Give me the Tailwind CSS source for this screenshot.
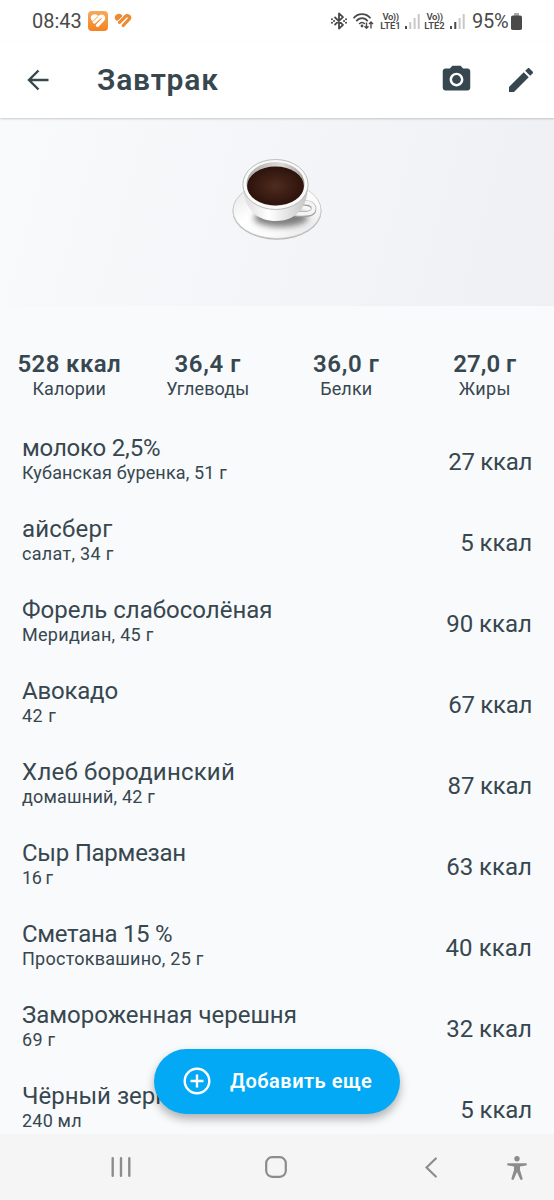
<!DOCTYPE html>
<html lang="ru">
<head>
  <meta charset="UTF-8">
  <meta name="viewport" content="width=device-width, initial-scale=1.0">
  <title>Завтрак</title>
  <script src="https://cdn.jsdelivr.net/npm/@tailwindcss/browser@4"></script>
</head>
<body class="bg-[#f9fafc] font-['Roboto',sans-serif] text-[#37474f]">
  <div class="relative flex h-[1200px] w-[554px] flex-col overflow-hidden">

    <!-- Status bar -->
    <div class="flex h-[42px] shrink-0 items-center bg-white pl-8 pr-[32px] text-[#4a4a4a]">
      <span class="w-[50px] whitespace-nowrap text-[20px] leading-none">08:43</span>
      <svg class="ml-[6px] h-5 w-5" viewBox="0 0 20 20">
        <defs>
          <linearGradient id="orange" x1="0" y1="0" x2="0" y2="1">
            <stop offset="0" stop-color="#f6a95c"/>
            <stop offset="1" stop-color="#f58220"/>
          </linearGradient>
        </defs>
        <rect width="20" height="20" rx="4" fill="url(#orange)"/>
        <g fill="none" stroke="#fff" stroke-width="3.200" stroke-linecap="round" stroke-linejoin="round">
          <path d="M4.600 7.800C3.800 5.500 6.500 4 8.500 5.700"/>
          <path d="M6.300 11 12 5.800c1.800-1.700 4.300 0 3.200 2"/>
          <path d="M9.500 14.300 15 8.500" stroke-width="3.400"/>
          <path d="M5 8.300 8.500 5.700"/>
        </g>
        <path d="M5.300 9.900 10 5.600M8 13l5.500-5.400" stroke="#f79440" stroke-width=".9"/>
      </svg>
      <svg class="ml-[6px] h-4 w-[18px]" viewBox="0 0 18 16" fill="none" stroke="#ee8a32" stroke-width="3.200" stroke-linecap="round" stroke-linejoin="round">
        <path d="M2.800 5.800C1.500 3.500 4.500 1.300 6.800 3.200L3.300 6"/>
        <path d="M5.500 9.300 11.300 3.600c2-2 5.200-.3 4.200 2L9.300 12.500"/>
        <path d="M3.800 8.200 9.200 3M7 11.500l6-6" stroke="#fff" stroke-width=".9" stroke-linecap="butt"/>
      </svg>

      <div class="ml-auto flex items-center">
        <svg class="h-[18px] w-4" viewBox="0 0 16 18" fill="none" stroke="#4a4a4a" stroke-width="1.800" stroke-linejoin="round">
          <path d="M3.500 5 12 12.800 8 16.600V1.400L12 5.200 3.500 13"/>
          <path d="M3 9h.1M13 9h.1M.9 7.200h.1M.9 10.800h.1M15 7.200h.1M15 10.800h.1" stroke-width="2" stroke-linecap="round"/>
        </svg>
        <svg class="ml-[5px] h-[18px] w-[23px]" viewBox="0 0 23 18" fill="none" stroke="#4a4a4a" stroke-width="1.700">
          <path d="M1.500 6.200C6 .7 14 .7 18.500 6.200M4.300 9.200c3.200-4 8.200-4 11.400 0M7.200 12c1.600-2 4-2 5.600 0"/>
          <circle cx="10" cy="14" r="1.400" fill="#4a4a4a" stroke="none"/>
          <path d="M14.500 10.500v6M12.500 14.300l2 2 2-2M19 16.500V10M17 12l2-2 2 2" stroke-width="1.400"/>
        </svg>
        <div class="ml-[5px] w-[21px] whitespace-nowrap text-center text-[9.500px] font-semibold leading-[9px]">
          <div class="tracking-[-0.5px]">Vo))</div>
          <div class="tracking-[-0.1px]">LTE1</div>
        </div>
        <svg class="ml-[4px] h-4 w-[15px]" viewBox="0 0 15 16">
          <path d="M0 13h2v3H0z" fill="#4a4a4a"/>
          <path d="M4.300 9h2v7h-2zM8.600 5h2v11h-2zM12.700 1h2v15h-2z" fill="#c8c8c8"/>
        </svg>
        <div class="ml-[4px] w-[21px] whitespace-nowrap text-center text-[9.500px] font-semibold leading-[9px]">
          <div class="tracking-[-0.5px]">Vo))</div>
          <div class="tracking-[-0.1px]">LTE2</div>
        </div>
        <svg class="ml-[5px] h-4 w-[15px]" viewBox="0 0 15 16">
          <path d="M0 13h2v3H0zM4.300 9h2v7h-2z" fill="#4a4a4a"/>
          <path d="M8.600 5h2v11h-2zM12.700 1h2v15h-2z" fill="#c8c8c8"/>
        </svg>
        <span class="ml-[7px] w-[39px] whitespace-nowrap text-[20px] leading-none tracking-[-0.2px]">95%</span>
        <svg class="h-[17px] w-[11px]" viewBox="0 0 11 17">
          <path d="M3 0h5v3H3z" fill="#aaa"/>
          <rect y="2.500" width="11" height="14.500" rx="1.800" fill="#4a4a4a"/>
        </svg>
      </div>
    </div>

    <!-- App bar -->
    <header class="z-10 flex h-[76px] shrink-0 items-center bg-white pl-[27px] pr-[17px] shadow-[0_1px_2px_rgba(0,0,0,0.2)]">
      <svg class="h-[22px] w-[22px]" viewBox="0 0 22 22" fill="none" stroke="#37474f" stroke-width="2.400">
        <path d="M21.500 11H2M11.500 1.500 2 11l9.500 9.500"/>
      </svg>
      <h1 class="ml-12 text-[30px] font-semibold leading-none tracking-[0.8px]">Завтрак</h1>
      <svg class="ml-auto h-[33px] w-[33px] -translate-y-px" viewBox="0 0 24 24" fill="#37474f">
        <circle cx="12" cy="12" r="3.200"/>
        <path d="M9 2 7.170 4H4c-1.100 0-2 .9-2 2v12c0 1.100.9 2 2 2h16c1.100 0 2-.9 2-2V6c0-1.100-.9-2-2-2h-3.170L15 2H9zm3 15c-2.760 0-5-2.240-5-5s2.240-5 5-5 5 2.240 5 5-2.240 5-5 5z"/>
      </svg>
      <svg class="ml-8 h-8 w-8" viewBox="0 0 24 24" fill="#37474f">
        <path d="M3 17.250V21h3.750L17.810 9.940l-3.750-3.750L3 17.250zM20.710 7.040c.39-.39.39-1.020 0-1.410l-2.340-2.340c-.39-.39-1.020-.39-1.410 0l-1.830 1.830 3.750 3.750 1.830-1.830z"/>
      </svg>
    </header>

    <!-- Meal picture -->
    <div class="flex h-[188px] shrink-0 justify-center bg-linear-[105deg,#f9fafc,#eff0f3] pt-[41px]">
      <svg class="h-[86px] w-[92px]" viewBox="0 0 92 86">
        <defs>
          <linearGradient id="saucer" x1="0" y1="0" x2="1" y2="1">
            <stop offset="0" stop-color="#e0e0e0"/>
            <stop offset=".4" stop-color="#fff"/>
            <stop offset=".7" stop-color="#fafafa"/>
            <stop offset="1" stop-color="#dedede"/>
          </linearGradient>
          <linearGradient id="cup" x1="0" y1="0" x2="1" y2="0">
            <stop offset="0" stop-color="#dcdcdc"/>
            <stop offset=".4" stop-color="#fff"/>
            <stop offset="1" stop-color="#c4c4c4"/>
          </linearGradient>
          <linearGradient id="inner" x1="0" y1="0" x2="1" y2="0">
            <stop offset="0" stop-color="#aaa9a5"/>
            <stop offset=".6" stop-color="#dddcd8"/>
            <stop offset="1" stop-color="#a3a29e"/>
          </linearGradient>
          <radialGradient id="coffee">
            <stop offset="0" stop-color="#4f2b1e"/>
            <stop offset="1" stop-color="#2d130c"/>
          </radialGradient>
          <filter id="soft" x="-30%" y="-50%" width="160%" height="200%"><feGaussianBlur stdDeviation="3"/></filter>
        </defs>
        <ellipse cx="46" cy="52" rx="44.500" ry="28.700" fill="#b5b5b5"/>
        <ellipse cx="46" cy="51.300" rx="44" ry="28.200" fill="url(#saucer)" stroke="#c9c9c9" stroke-width=".8"/>
        <ellipse cx="50" cy="59" rx="27" ry="9" fill="#555" opacity=".75" filter="url(#soft)"/>
        <path d="M64 46.500c10-5 20-2 18.500 4.500-1 4.500-7 4.500-18.500 4" fill="none" stroke="#a0a0a0" stroke-width="5.600"/>
        <path d="M64 46c10-5 20-2 18.500 4.500-1 4.500-7 4.500-18.500 4" fill="none" stroke="#f4f4f4" stroke-width="4"/>
        <path d="M12 28c1 22 14 34 33 34S76 50 77 28z" fill="url(#cup)"/>
        <ellipse cx="44.500" cy="25.500" rx="32.600" ry="25" fill="#fafafa" stroke="#b4b4b4" stroke-width=".9"/>
        <ellipse cx="44.500" cy="25" rx="29" ry="22" fill="url(#inner)"/>
        <ellipse cx="44.500" cy="27" rx="28.400" ry="19.600" fill="url(#coffee)"/>
      </svg>
    </div>

    <!-- Totals -->
    <div class="grid h-[115px] shrink-0 grid-cols-4 pt-[46px] text-center">
      <div>
        <div class="text-[24px] font-semibold leading-6 tracking-[0.4px]">528 ккал</div>
        <div class="mt-px text-[18px] leading-6 tracking-[0.1px]">Калории</div>
      </div>
      <div>
        <div class="text-[24px] font-semibold leading-6 tracking-[0.6px]">36,4 г</div>
        <div class="mt-px text-[18px] leading-6 tracking-[0.1px]">Углеводы</div>
      </div>
      <div>
        <div class="text-[24px] font-semibold leading-6 tracking-[0.6px]">36,0 г</div>
        <div class="mt-px text-[18px] leading-6 tracking-[0.1px]">Белки</div>
      </div>
      <div>
        <div class="text-[24px] font-semibold leading-6">27,0 г</div>
        <div class="mt-px text-[18px] leading-6 tracking-[0.3px]">Жиры</div>
      </div>
    </div>

    <!-- Foods -->
    <ul class="min-h-0 flex-1 overflow-hidden px-[22px] whitespace-nowrap">
      <li class="flex h-[81px] items-center justify-between">
        <div class="pb-[5px]">
          <div class="text-[24px] leading-7 tracking-[-0.2px]">молоко 2,5%</div>
          <div class="text-[18px] leading-[22px] tracking-[0.15px]">Кубанская буренка, 51 г</div>
        </div>
        <div class="text-[24px] tracking-[-0.3px]">27 ккал</div>
      </li>
      <li class="flex h-[81px] items-center justify-between">
        <div class="pb-[5px]">
          <div class="text-[24px] leading-7 tracking-[0.2px]">айсберг</div>
          <div class="text-[18px] leading-[22px] tracking-[0.3px]">салат, 34 г</div>
        </div>
        <div class="text-[24px] tracking-[-0.1px]">5 ккал</div>
      </li>
      <li class="flex h-[81px] items-center justify-between">
        <div class="pb-[5px]">
          <div class="text-[24px] leading-7">Форель слабосолёная</div>
          <div class="text-[18px] leading-[22px] tracking-[0.3px]">Меридиан, 45 г</div>
        </div>
        <div class="text-[24px]">90 ккал</div>
      </li>
      <li class="flex h-[81px] items-center justify-between">
        <div class="pb-[5px]">
          <div class="text-[24px] leading-7 tracking-[-0.2px]">Авокадо</div>
          <div class="text-[18px] leading-[22px] tracking-[0.5px]">42 г</div>
        </div>
        <div class="text-[24px] tracking-[-0.3px]">67 ккал</div>
      </li>
      <li class="flex h-[81px] items-center justify-between">
        <div class="pb-[5px]">
          <div class="text-[24px] leading-7 tracking-[0.2px]">Хлеб бородинский</div>
          <div class="text-[18px] leading-[22px] tracking-[0.2px]">домашний, 42 г</div>
        </div>
        <div class="text-[24px] tracking-[-0.2px]">87 ккал</div>
      </li>
      <li class="flex h-[81px] items-center justify-between">
        <div class="pb-[5px]">
          <div class="text-[24px] leading-7 tracking-[-0.25px]">Сыр Пармезан</div>
          <div class="text-[18px] leading-[22px] tracking-[-0.4px]">16 г</div>
        </div>
        <div class="text-[24px]">63 ккал</div>
      </li>
      <li class="flex h-[81px] items-center justify-between">
        <div class="pb-[5px]">
          <div class="text-[24px] leading-7 tracking-[-0.3px]">Сметана 15 %</div>
          <div class="text-[18px] leading-[22px] tracking-[0.25px]">Простоквашино, 25 г</div>
        </div>
        <div class="text-[24px] tracking-[0.1px]">40 ккал</div>
      </li>
      <li class="flex h-[81px] items-center justify-between">
        <div class="pb-[5px]">
          <div class="text-[24px] leading-7">Замороженная черешня</div>
          <div class="text-[18px] leading-[22px] tracking-[0.3px]">69 г</div>
        </div>
        <div class="text-[24px]">32 ккал</div>
      </li>
      <li class="flex h-[81px] items-center justify-between">
        <div class="pb-[5px]">
          <div class="text-[24px] leading-7">Чёрный зерн</div>
          <div class="text-[18px] leading-[22px] tracking-[0.2px]">240 мл</div>
        </div>
        <div class="text-[24px] tracking-[-0.1px]">5 ккал</div>
      </li>
    </ul>

    <button class="absolute left-[154px] top-[1049px] flex h-[65px] w-[246px] items-center rounded-full bg-[#03a9f4] pl-[29px] pb-px text-white shadow-[0_5px_10px_rgba(0,0,0,0.3)]">
      <svg class="h-7 w-7" viewBox="0 0 28 28" fill="none" stroke="#fff" stroke-width="2.400">
        <circle cx="14" cy="14" r="12.300"/>
        <path d="M14 7.500v13M7.500 14h13"/>
      </svg>
      <span class="ml-[19px] whitespace-nowrap text-[20px] font-semibold tracking-[0.5px]">Добавить еще</span>
    </button>

    <!-- System navigation -->
    <nav class="flex h-[66px] shrink-0 items-center bg-[#f5f5f5] pl-[111px] pr-[27px]">
      <svg class="h-[20px] w-5" viewBox="0 0 20 20" fill="none" stroke="#8c8c8c" stroke-width="2.400" stroke-linecap="round">
        <path d="M1.700 1.200v17.600M10 1.200v17.600M18.300 1.200v17.600"/>
      </svg>
      <svg class="ml-[134px] h-[22px] w-[22px]" viewBox="0 0 22 22" fill="none" stroke="#8c8c8c" stroke-width="2.200">
        <rect x="1.200" y="1.200" width="19.600" height="19.600" rx="6"/>
      </svg>
      <svg class="ml-[138px] h-[21px] w-3" viewBox="0 0 12 21" fill="none" stroke="#8c8c8c" stroke-width="2.200" stroke-linecap="round">
        <path d="M10.800 1.500 1.500 10.500l9.300 9"/>
      </svg>
      <svg class="ml-auto h-6 w-5 translate-y-px" viewBox="0 0 20 24" fill="#8c8c8c">
        <circle cx="10" cy="2.800" r="2.700"/>
        <path d="M1.200 7.300h17.600a1 1 0 0 1 0 2.200L13 10.500v3.500l2.600 8.500a1.300 1.300 0 0 1-2.400.8L10 16l-3.200 7.300a1.300 1.300 0 0 1-2.400-.8L7 14v-3.500L1.200 9.500a1 1 0 0 1 0-2.200z"/>
      </svg>
    </nav>
  </div>
</body>
</html>
